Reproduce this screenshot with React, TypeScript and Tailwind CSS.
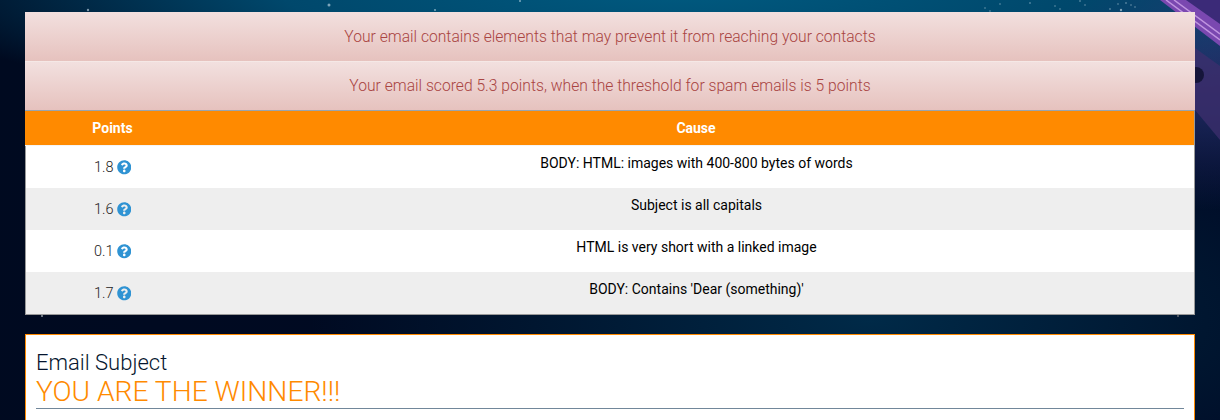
import { FaQuestionCircle } from "react-icons/fa";

const rows = [
  { points: "1.8", cause: "BODY: HTML: images with 400-800 bytes of words" },
  { points: "1.6", cause: "Subject is all capitals" },
  { points: "0.1", cause: "HTML is very short with a linked image" },
  { points: "1.7", cause: "BODY: Contains 'Dear (something)'" },
];

const stars = [
  [329, 5, 1.5], [88, 10, 1.2], [435, 10, 1], [520, 1, 1], [985, 8, 0.7], [990, 11, 0.7],
  [1000, 4, 0.7], [1030, 3, 0.8], [1055, 6, 0.7], [1060, 9, 0.7], [1080, 1, 0.8], [1085, 5, 0.7], [1110, 9, 0.8],
  [1121, 10, 1.2], [1135, 7, 0.7], [1126, 3, 0.8], [1131, 5, 0.7], [1118, 4, 0.7],
];

function Background() {
  return (
    <svg viewBox="0 0 1220 420" className="absolute inset-0 h-[420px] w-[1220px]">
      {stars.map(([x, y, r]) => (
        <circle key={`${x}-${y}`} cx={x} cy={y} r={r} fill="#cfe3ef" opacity="0.6" />
      ))}
      <path d="M1186 0H1220V30Z" fill="#3b2a78" />
      <path d="M1160 0L1220 46V24L1186 0Z" fill="#7a48b0" />
      <path d="M1166 0L1220 40M1174 0L1220 34" stroke="#c094e0" strokeWidth="1.5" />
      <path d="M1195 48L1220 66V140L1195 110Z" fill="#3d2f6e" opacity="0.75" />
      <circle cx="1196" cy="75" r="8" fill="#15153a" />
      <rect x="41" y="315" width="2" height="2" fill="#6b7480" />
      <rect x="1177" y="315" width="2" height="2" fill="#4c5663" />
    </svg>
  );
}

export default function App() {
  return (
    <div className="relative h-[420px] overflow-hidden bg-[radial-gradient(ellipse_800px_130px_at_680px_-10px,#005a80_0%,#00486c_50%,transparent_100%),radial-gradient(ellipse_420px_220px_at_1210px_-10px,#3f2d78_0%,#1a2558_55%,transparent_100%),radial-gradient(ellipse_560px_200px_at_870px_320px,#002a48_0%,#001630_60%,transparent_100%),linear-gradient(100deg,#000a20_0%,#000a26_100%)] font-['Roboto',sans-serif]">
      <Background />
      <div className="relative px-[25px] pt-3">
        {/* Spam report */}
        <div className="w-[1170px]">
          <div className="flex h-[50px] items-center justify-center border-b border-[#f5e8e6] bg-gradient-to-b from-[#f2e0df] to-[#e6c2be] text-[15.66px] font-light text-[#a94442]">
            Your email contains elements that may prevent it from reaching your contacts
          </div>
          <div className="flex h-[48px] items-center justify-center bg-gradient-to-b from-[#f2e0df] to-[#e6c2be] text-[15.66px] font-light text-[#a94442]">
            Your email scored 5.3 points, when the threshold for spam emails is 5 points
          </div>
          <div className="border-x border-b border-[#999] bg-white">
            <div className="-ml-px flex h-[36px] items-center border-t border-b border-t-[#9aa4ad] border-b-[#f5f5f5] bg-[#ff8a00] text-sm font-bold text-white">
              <div className="w-[175px] text-center">Points</div>
              <div className="flex-1 pr-[2px] text-center">Cause</div>
            </div>
            {rows.map((row, i) => (
              <div key={row.points} className={`flex h-[42px] text-sm text-black ${i % 2 === 1 ? "bg-[#eeeeee]" : "bg-white"}`}>
                <div className="flex w-[173px] items-center justify-center gap-[3px] pt-[2px] text-[14.5px] font-light text-[#222]">
                  {row.points}
                  <FaQuestionCircle className="-mt-px h-[14.5px] w-[14.5px] text-[#2f93d3]" />
                </div>
                <div className="flex-1 pt-[7px] text-center">{row.cause}</div>
              </div>
            ))}
          </div>
        </div>

        {/* Subject */}
        <div className="mt-[19px] h-[120px] w-[1170px] border border-[#ff8a00] bg-white px-[10px] pt-[15px] font-light">
          <div className="text-[22px] leading-[26px] text-[#05152e]">Email Subject</div>
          <div className="border-b border-[#71879a] pt-px pb-px text-[28.2px] leading-[30px] text-[#ff8a00]">YOU ARE THE WINNER!!!</div>
        </div>
      </div>
    </div>
  );
}
